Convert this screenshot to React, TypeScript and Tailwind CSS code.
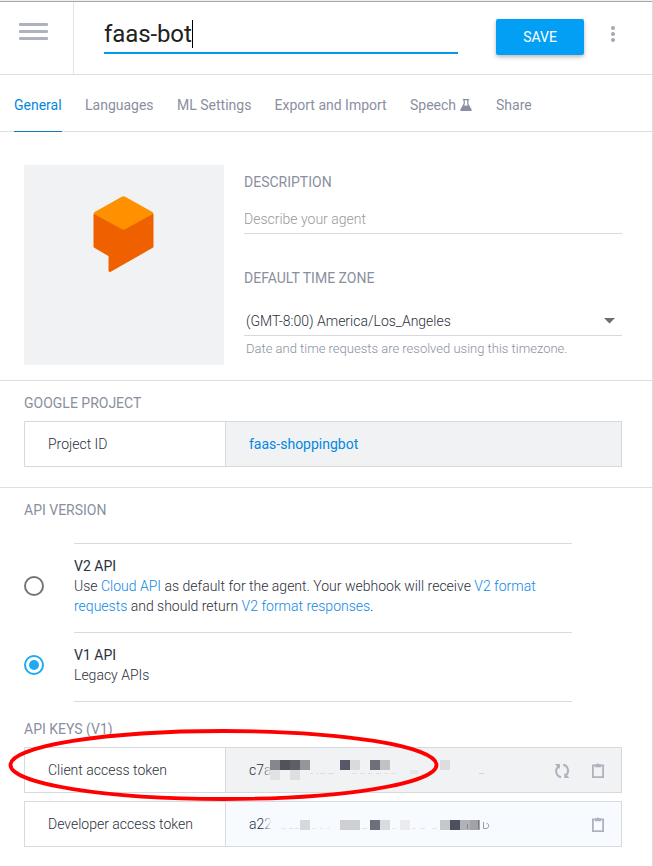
import type { ReactNode } from "react";

type Block = [x: number, y: number, w: number, h: number, color: string];

const clientMask: Block[] = [
  [270, 760, 10, 10, "#85878e"],
  [280, 760, 10, 10, "#50525c"],
  [290, 760, 10, 10, "#5c5e68"],
  [300, 760, 10, 10, "#94969b"],
  [270, 770, 10, 10, "#e2e2e4"],
  [290, 770, 10, 10, "#dfdfe1"],
  [340, 760, 10, 10, "#565965"],
  [350, 760, 10, 10, "#d9dadc"],
  [370, 760, 10, 10, "#6d707b"],
  [380, 760, 10, 10, "#c1c2c6"],
  [440, 760, 10, 10, "#dcdddf"],
  [410, 770, 8, 4, "#e7e7e9"],
  [310, 773, 3, 1, "#dedfe2"],
  [316, 773, 2, 1, "#dedfe2"],
  [320, 773, 5, 1, "#dcdde0"],
  [328, 773, 6, 1, "#dedfe2"],
  [352, 773, 5, 1, "#dedfe2"],
  [360, 773, 5, 1, "#dedfe2"],
  [368, 773, 4, 1, "#dedfe2"],
  [376, 773, 5, 1, "#dedfe2"],
  [384, 773, 4, 1, "#dedfe2"],
  [391, 773, 5, 1, "#dedfe2"],
  [479, 773, 5, 1, "#d6d7da"],
];

const developerMask: Block[] = [
  [300, 820, 10, 10, "#d6d8dc"],
  [340, 820, 20, 10, "#cdcfd3"],
  [370, 820, 10, 10, "#6d707b"],
  [380, 820, 10, 10, "#d9dbdf"],
  [400, 820, 10, 10, "#e9ebef"],
  [440, 820, 10, 10, "#c5c7cb"],
  [450, 820, 10, 10, "#4e505e"],
  [460, 820, 10, 10, "#b0b2b8"],
  [470, 820, 10, 10, "#a0a2a8"],
  [281, 828, 5, 1, "#e3e6ea"],
  [289, 828, 4, 1, "#e0e3e8"],
  [295, 828, 4, 1, "#e0e3e8"],
  [312, 828, 4, 1, "#e6e9ee"],
  [320, 828, 3, 1, "#e6e9ee"],
  [327, 828, 3, 1, "#e6e9ee"],
  [362, 828, 5, 1, "#e0e3e8"],
  [392, 828, 4, 1, "#e6e9ee"],
  [412, 828, 4, 1, "#e3e6ea"],
  [420, 828, 5, 1, "#e3e6ea"],
  [432, 828, 5, 1, "#e3e6ea"],
  [467, 824, 1, 5, "#85878e"],
  [478, 820, 1, 9, "#777982"],
];

function Mosaic({ id, blocks, top, tone, children }: { id: string; blocks: Block[]; top: number; tone: string; children?: ReactNode }) {
  return (
    <svg className="absolute left-0 top-0" width="300" height="44" viewBox={`226 ${top} 300 44`}>
      <linearGradient id={id}>
        <stop offset="0" stopColor={tone} stopOpacity="0" />
        <stop offset="1" stopColor={tone} />
      </linearGradient>
      <rect x="262" y={top + 12} width="10" height="20" fill={`url(#${id})`} />
      <g shapeRendering="crispEdges">
        {blocks.map(([x, y, w, h, c], i) => (
          <rect key={i} x={x} y={y} width={w} height={h} fill={c} />
        ))}
      </g>
      {children}
    </svg>
  );
}

function ClipboardIcon() {
  return (
    <svg width="14" height="16" viewBox="0 0 14 16" fill="none">
      <path d="M1.900 2.400h10.200v11.700H1.900z" stroke="#aeb2be" strokeWidth="1.800" />
      <path d="M4 1.500h1.500q.3-1 1.500-1t1.500 1H10v2.700H4z" fill="#aeb2be" />
    </svg>
  );
}

function RefreshIcon() {
  return (
    <svg width="16" height="16" viewBox="0 0 16 16" fill="none">
      <path d="M4.300 3.500C.2 7.600 2.300 13.400 7 14.300M9.200 1.800c4.700.9 6.800 6.600 2.700 10.700" stroke="#aeb2be" strokeWidth="1.900" />
      <path d="M.8 1.100h5.100v5zM15.400 14.900h-5.100v-5z" fill="#aeb2be" />
    </svg>
  );
}

function Heading({ children }: { children: ReactNode }) {
  return <h2 className="text-sm leading-5 text-[#8a8fa0]">{children}</h2>;
}

function Row({ label, tone, children, className = "" }: { label: string; tone: string; children: ReactNode; className?: string }) {
  return (
    <div className={`flex h-[46px] w-[598px] border border-[#d7d9dc] text-sm ${className}`}>
      <div className="flex w-[201px] shrink-0 items-center border-r border-[#d7d9dc] pl-[23px] font-light text-[#2b303b]">
        {label}
      </div>
      <div className={`relative flex flex-1 items-center pl-[23px] ${tone}`}>{children}</div>
    </div>
  );
}

function Link({ children }: { children: ReactNode }) {
  return <a className="text-[#0f88e6]">{children}</a>;
}

const tabs = [
  { name: "General", left: "w-[71px]" },
  { name: "Languages", left: "w-[92px]" },
  { name: "ML Settings", left: "w-[97.500px]" },
  { name: "Export and Import", left: "w-[135.500px]" },
  { name: "Speech", left: "w-[86px]" },
  { name: "Share", left: "w-[50px]" },
];

export default function App() {
  return (
    <div className="relative h-[866px] w-[653px] overflow-hidden border-r border-[#dcdcde] bg-white font-[Roboto,sans-serif] text-[#2b303b]">
      <div className="h-0.5 border-b border-[#a6a6a6] bg-[#f0f0f0]" />
      <header className="flex h-[73px] border-b border-[#dedfe1]">
        <div className="flex w-[74px] shrink-0 flex-col gap-1 border-r border-[#e2e3e5] pl-[19px] pt-[21px]">
          <span className="h-[3px] w-[29px] rounded-[1px] bg-[#aeb1bf]" />
          <span className="h-[3px] w-[29px] rounded-[1px] bg-[#aeb1bf]" />
          <span className="h-[3px] w-[29px] rounded-[1px] bg-[#aeb1bf]" />
        </div>
        <div className="ml-[30px] flex h-[52px] w-[354px] items-start border-b-2 border-[#039be5] pt-[17px] text-2xl leading-[30px] tracking-[-0.1px] text-[#212121]">
          faas-bot
          <span className="mt-px h-7 w-px bg-black" />
        </div>
        <button className="ml-[38px] mt-[17px] h-9 w-[88px] rounded-[2px] bg-[#039ff5] text-sm text-white shadow-[0_2px_4px_rgba(0,0,0,0.28)]">
          SAVE
        </button>
        <div className="ml-[27px] mt-[24px] flex flex-col gap-0.5">
          <span className="size-1 rounded-full bg-[#a5a8b3]" />
          <span className="size-1 rounded-full bg-[#a5a8b3]" />
          <span className="size-1 rounded-full bg-[#a5a8b3]" />
        </div>
      </header>

      <nav className="flex h-[57px] border-b border-[#dedfe1] pl-3.5 text-sm leading-5 text-[#8a8fa0]">
        {tabs.map((t, i) => (
          <div key={t.name} className={`${t.left} shrink-0 whitespace-nowrap`}>
            {i === 0 ? (
              <div className="h-[57px] w-12 border-b border-[#1377b8] pt-5 text-[#0288e0]">{t.name}</div>
            ) : (
              <div className="flex pt-5">
                {t.name}
                {t.name === "Speech" && (
                  <svg className="ml-1 mt-1" width="12" height="12" viewBox="0 0 12 12">
                    <path d="M2.800 0h6.400v1.200H8.400v3.600l3.200 5.600c.4.900 0 1.500-.8 1.500H1.200c-.8 0-1.200-.6-.8-1.500l3.200-5.600V1.200h-.8z" fill="#8a8fa0" />
                    <path d="M4.800 1.200h2.400v3.900l.8 1.300H4l.8-1.300z" fill="#fff" />
                  </svg>
                )}
              </div>
            )}
          </div>
        ))}
      </nav>

      <section className="flex h-[249px] gap-5 border-b border-[#dedfe1] pl-6 pt-[33px]">
        <div className="size-[200px] bg-[#f1f2f4]">
          <svg width="200" height="200" viewBox="24 165 200 200">
            <path d="M95 214.500l28-3 29 3v32L110 270.500V255.200l-15-8.700z" fill="#ef6100" stroke="#ef6100" strokeWidth="3" strokeLinejoin="round" />
            <path d="M94.200 212.200 121.800 196.800q1.700-.9 3.400 0L152.800 212.200q1 .9 0 1.800L125 229.200q-1.500.9-3 0L94.200 214q-1-.9 0-1.800z" fill="#ff9100" />
          </svg>
        </div>
        <div className="w-[378px] pt-[7px]">
          <Heading>DESCRIPTION</Heading>
          <div className="mt-3.5 h-[28px] border-b border-[#d7d9dc] pt-[3px] text-sm leading-5 font-light text-[#999]">
            Describe your agent
          </div>
          <div className="mt-[34px]">
            <Heading>DEFAULT TIME ZONE</Heading>
          </div>
          <div className="mt-[19px] flex h-[29px] justify-between border-b border-[#d7d9dc] pl-0.5 pr-[7px] pt-1 text-sm leading-5 font-light">
            <span>(GMT-8:00) America/Los_Angeles</span>
            <svg className="mt-[7px]" width="11" height="6" viewBox="0 0 11 6"><path d="M0 0h11L5.500 5.600z" fill="#6f6f6f" /></svg>
          </div>
          <p className="pl-0.5 pt-[3px] text-[13px] leading-5 font-light text-[#8a8fa0]">
            Date and time requests are resolved using this timezone.
          </p>
        </div>
      </section>

      <section className="h-[107px] border-b border-[#dedfe1] pl-6 pt-3">
        <Heading>GOOGLE PROJECT</Heading>
        <Row className="mt-2" label="Project ID" tone="bg-[#f1f2f4]">
          <a className="text-[#0288e0]">faas-shoppingbot</a>
        </Row>
      </section>

      <section className="pl-6 pt-3">
        <Heading>API VERSION</Heading>
        <div className="relative mt-[23px] ml-[50px] h-[90px] w-[498px] border-y border-[#d9dadd] pt-3 text-sm leading-5">
          <span className="absolute top-8 -left-[50px] size-5 rounded-full border-2 border-[#757575]" />
          <h3>V2 API</h3>
          <p className="font-light">
            Use <Link>Cloud API</Link> as default for the agent. Your webhook will receive <Link>V2 format</Link>
            <br />
            <Link>requests</Link> and should return <Link>V2 format responses</Link>.
          </p>
        </div>
        <div className="relative ml-[50px] h-[69px] w-[498px] border-b border-[#d9dadd] pt-3 text-sm leading-5">
          <span className="absolute top-[22px] -left-[50px] flex size-5 items-center justify-center rounded-full border-2 border-[#1eaaf1]">
            <span className="size-2.5 rounded-full bg-[#1eaaf1]" />
          </span>
          <h3>V1 API</h3>
          <p className="font-light">Legacy APIs</p>
        </div>
        <div className="mt-[17px]">
          <Heading>API KEYS (V1)</Heading>
        </div>
        <Row className="mt-2" label="Client access token" tone="bg-[#f1f2f4]">
          <span className="font-light">c7a</span>
          <Mosaic id="client-fade" blocks={clientMask} top={748} tone="#f1f2f4" />
          <div className="ml-auto flex items-center gap-[21px] pr-4 pt-0.5">
            <RefreshIcon />
            <ClipboardIcon />
          </div>
        </Row>
        <Row className="mt-2" label="Developer access token" tone="bg-[#f7fbff]">
          <span className="font-light">a22</span>
          <Mosaic id="developer-fade" blocks={developerMask} top={802} tone="#f7fbff">
            <path d="M483.500 822v6.500h2.500c3.500 0 3.500-5 .5-5.300" fill="none" stroke="#9a9ca4" />
          </Mosaic>
          <div className="ml-auto flex items-center pr-4 pt-0.5">
            <ClipboardIcon />
          </div>
        </Row>
      </section>

      <svg className="absolute left-0 top-[720px]" width="450" height="90" viewBox="0 720 450 90" fill="none">
        <ellipse cx="223.500" cy="765" rx="213" ry="34" stroke="#f00" strokeWidth="3.800" />
      </svg>
    </div>
  );
}
